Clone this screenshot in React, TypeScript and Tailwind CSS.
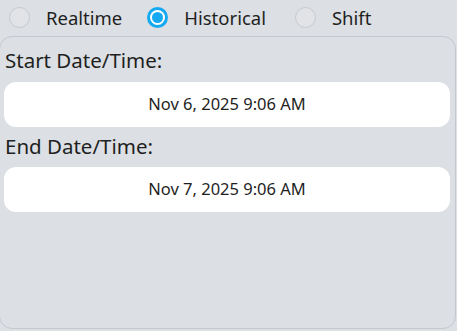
import React from "react";

function Radio({ checked, label, className }: { checked?: boolean; label: string; className?: string }) {
  return (
    <div className={"flex items-center " + (className ?? "")}>
      {checked ? (
        <div className="w-[21px] h-[21px] rounded-full bg-[#14a9f0] flex items-center justify-center">
          <div className="w-[15px] h-[15px] rounded-full bg-white flex items-center justify-center">
            <div className="w-[11px] h-[11px] rounded-full bg-[#14a9f0]" />
          </div>
        </div>
      ) : (
        <div className="w-[21px] h-[21px] rounded-full border-[1.5px] border-[#c6c9ce] bg-[#e1e3e6]" />
      )}
      <span className="ml-[16px] text-[18.5px] text-[#1f1f1f]">{label}</span>
    </div>
  );
}

export default function App() {
  return (
    <div
      className="w-[457px] h-[331px] bg-[#dcdfe3] overflow-hidden flex flex-col"
      style={{ fontFamily: '"Noto Sans", "Open Sans", sans-serif' }}
    >
      <div className="flex items-center h-[34px] pl-[9px] pt-[1px]">
        <Radio label="Realtime" />
        <Radio checked label="Historical" className="ml-[25px]" />
        <Radio label="Shift" className="ml-[29px]" />
      </div>
      <div className="mt-[2px] ml-[-1px] w-[457px] h-[293px] border border-[#c4c8ce] rounded-[13px] flex flex-col pl-[4px] pr-[5px]">
        <div className="text-[20.5px] text-[#1f1f1f] leading-[26px] mt-[10px] pl-[1px]">Start Date/Time:</div>
        <div className="mt-[9px] h-[45px] rounded-[12px] bg-white flex items-center justify-center text-[16.5px] text-[#1f1f1f]">
          Nov 6, 2025 9:06 AM
        </div>
        <div className="text-[20.5px] text-[#1f1f1f] leading-[26px] mt-[6px] pl-[1px]">End Date/Time:</div>
        <div className="mt-[8px] h-[45px] rounded-[12px] bg-white flex items-center justify-center text-[16.5px] text-[#1f1f1f]">
          Nov 7, 2025 9:06 AM
        </div>
      </div>
    </div>
  );
}
